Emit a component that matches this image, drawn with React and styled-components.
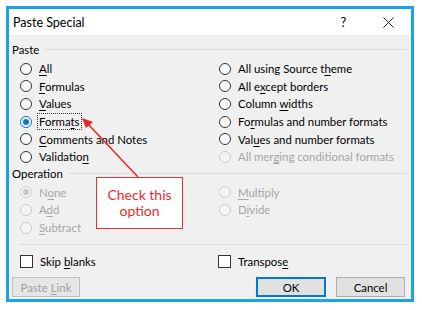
import React from "react";
import styled, { createGlobalStyle } from "styled-components";

const GlobalStyle = createGlobalStyle`
  html, body {
    margin: 0;
    padding: 0;
    background: #ffffff;
  }
  body {
    font-family: Lato, "Noto Sans", sans-serif;
    font-size: 11.4px;
    color: #000;
  }
  u {
    text-decoration-thickness: 1px;
    text-underline-offset: 2px;
  }
`;

const Frame = styled.div`
  position: relative;
  margin: 6px 0 0 6px;
  width: 408px;
  height: 296px;
  box-sizing: border-box;
  border: 3px solid #1aa3e8;
  background: #f0f0f0;
  display: flex;
  flex-direction: column;
`;

const TitleBar = styled.div`
  height: 26px;
  background: #ffffff;
  display: flex;
  align-items: center;
  padding-left: 4px;
  font-size: 12.5px;
`;

const Title = styled.div`
  flex: 1;
`;

const TitleButton = styled.div`
  width: 45px;
  height: 26px;
  display: flex;
  align-items: center;
  justify-content: center;
  font-size: 13px;
`;

const Body = styled.div`
  flex: 1;
  display: flex;
  flex-direction: column;
  padding: 7px 4px 0 3px;
`;

const GroupHeader = styled.div`
  height: 14px;
  display: flex;
  align-items: center;
  gap: 6px;
  margin-top: ${(p) => p.$top || 0}px;
  &::after {
    content: "";
    flex: 1;
    height: 1px;
    background: #dcdcdc;
  }
`;

const OptionGrid = styled.div`
  display: grid;
  grid-template-columns: 199px 1fr;
  grid-auto-flow: column;
  grid-template-rows: repeat(${(p) => p.$rows}, 17.6px);
  padding-left: 8px;
  margin-top: ${(p) => p.$top}px;
`;

const Option = styled.label`
  display: flex;
  align-items: center;
  gap: 7px;
  color: ${(p) => (p.$disabled ? "#a6a6a6" : "#000")};
  white-space: nowrap;
`;

const Text = styled.span`
  white-space: nowrap;
`;

const Radio = styled.span`
  width: 12px;
  height: 12px;
  box-sizing: border-box;
  border-radius: 50%;
  border: 1px solid
    ${(p) => (p.$disabled ? "#cccccc" : p.$checked ? "#0078d7" : "#333333")};
  background: ${(p) => (p.$disabled ? "#f4f4f4" : "#ffffff")};
  display: flex;
  align-items: center;
  justify-content: center;
  flex-shrink: 0;
  &::after {
    content: "";
    display: ${(p) => (p.$checked ? "block" : "none")};
    width: 6px;
    height: 6px;
    border-radius: 50%;
    background: ${(p) => (p.$disabled ? "#c4c4c4" : "#0078d7")};
  }
`;

const Focus = styled.span`
  outline: 1px dotted #333;
  outline-offset: 1px;
`;

const Separator = styled.div`
  height: 1px;
  background: #dcdcdc;
  margin: 8px 0 0 7px;
`;

const CheckRow = styled.div`
  display: grid;
  grid-template-columns: 198px 1fr;
  height: 18px;
  margin-top: 7px;
  padding-left: 8px;
`;

const Checkbox = styled.span`
  width: 13px;
  height: 13px;
  box-sizing: border-box;
  border: 1px solid #333333;
  background: #ffffff;
  flex-shrink: 0;
`;

const ButtonRow = styled.div`
  display: flex;
  align-items: center;
  margin-top: 7px;
  padding-right: 2px;
`;

const Button = styled.div`
  width: ${(p) => p.$w}px;
  height: 20px;
  box-sizing: border-box;
  display: flex;
  align-items: center;
  justify-content: center;
  background: #e1e1e1;
  border: ${(p) => (p.$primary ? "2px solid #0078d7" : "1px solid #adadad")};
  color: ${(p) => (p.$disabled ? "#a0a0a0" : "#000")};
  ${(p) => p.$disabled && "border-color: #bfbfbf; background: #e6e6e6;"}
  margin-left: ${(p) => p.$ml || 0}px;
`;

const Spacer = styled.div`
  flex: 1;
`;

const Callout = styled.div`
  position: absolute;
  left: 87px;
  top: 168px;
  width: 87px;
  height: 52px;
  box-sizing: border-box;
  border: 1px solid #e23434;
  background: #ffffff;
  color: #f02a2a;
  font-size: 14px;
  line-height: 16px;
  display: flex;
  align-items: center;
  justify-content: center;
  text-align: center;
`;

const ArrowLayer = styled.svg`
  position: absolute;
  left: 0;
  top: 0;
  pointer-events: none;
`;

const leftPaste = [
  { label: <><u>A</u>ll</> },
  { label: <><u>F</u>ormulas</> },
  { label: <><u>V</u>alues</> },
  { label: <Focus>Forma<u>t</u>s</Focus>, checked: true },
  { label: <><u>C</u>omments and Notes</> },
  { label: <>Validatio<u>n</u></> },
];

const rightPaste = [
  { label: <>All using Source t<u>h</u>eme</> },
  { label: <>All e<u>x</u>cept borders</> },
  { label: <>Column <u>w</u>idths</> },
  { label: <>Fo<u>r</u>mulas and number formats</> },
  { label: <>Val<u>u</u>es and number formats</> },
  { label: <>All mer<u>g</u>ing conditional formats</>, disabled: true },
];

const operations = [
  { label: <>N<u>o</u>ne</>, checked: true, disabled: true },
  { label: <>A<u>d</u>d</>, disabled: true },
  { label: <><u>S</u>ubtract</>, disabled: true },
  { label: <><u>M</u>ultiply</>, disabled: true },
  { label: <>D<u>i</u>vide</>, disabled: true },
  null,
];

function RadioOption({ item }) {
  if (!item) return <span />;
  return (
    <Option $disabled={item.disabled}>
      <Radio $checked={item.checked} $disabled={item.disabled} />
      <Text>{item.label}</Text>
    </Option>
  );
}

export default function App() {
  return (
    <>
      <GlobalStyle />
      <Frame>
        <TitleBar>
          <Title>Paste Special</Title>
          <TitleButton>?</TitleButton>
          <TitleButton>
            <svg width="11" height="11" viewBox="0 0 11 11">
              <path d="M0.5 0.5 L10.5 10.5 M10.5 0.5 L0.5 10.5" stroke="#222" strokeWidth="1" />
            </svg>
          </TitleButton>
        </TitleBar>
        <Body>
          <GroupHeader>Paste</GroupHeader>
          <OptionGrid $rows={6} $top={4}>
            {[...leftPaste, ...rightPaste].map((item, i) => (
              <RadioOption key={i} item={item} />
            ))}
          </OptionGrid>
          <GroupHeader $top={1}>Operation</GroupHeader>
          <OptionGrid $rows={3} $top={3}>
            {operations.map((item, i) => (
              <RadioOption key={i} item={item} />
            ))}
          </OptionGrid>
          <Separator />
          <CheckRow>
            <Option>
              <Checkbox />
              <Text>
                Skip <u>b</u>lanks
              </Text>
            </Option>
            <Option>
              <Checkbox />
              <Text>
                Transpos<u>e</u>
              </Text>
            </Option>
          </CheckRow>
          <ButtonRow>
            <Button $w={68} $disabled>
              <Text>
                Paste <u>L</u>ink
              </Text>
            </Button>
            <Spacer />
            <Button $w={70} $primary>
              OK
            </Button>
            <Button $w={69} $ml={10}>
              Cancel
            </Button>
          </ButtonRow>
        </Body>
        <Callout>
          Check this
          <br />
          option
        </Callout>
        <ArrowLayer width="402" height="290">
          <line x1="129" y1="168" x2="78" y2="114" stroke="#e8262a" strokeWidth="1.5" />
          <polygon points="73,109 84,113 77,119" fill="#e8262a" />
        </ArrowLayer>
      </Frame>
    </>
  );
}
